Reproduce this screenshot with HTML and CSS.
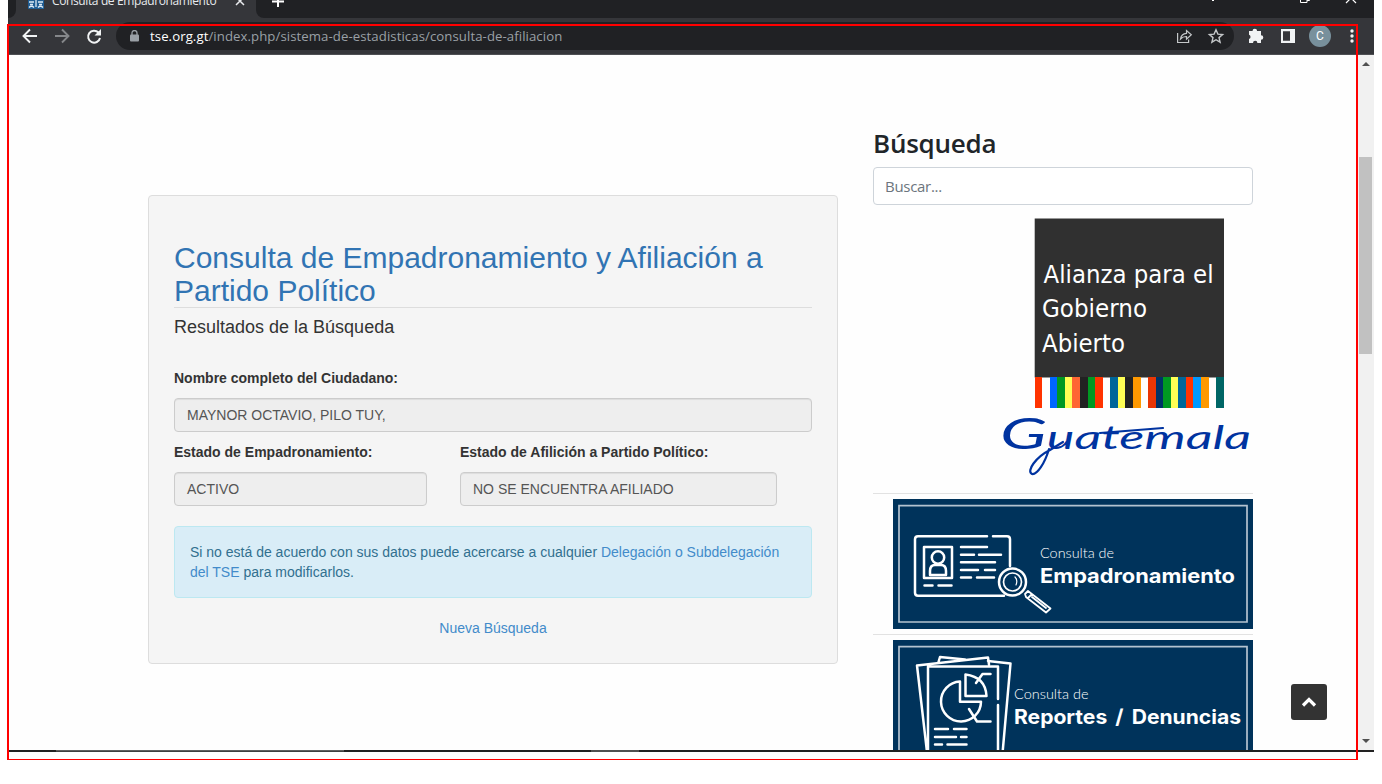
FILE: index.html
```html
<!DOCTYPE html>
<html lang="es">
<head>
<meta charset="utf-8">
<title>Consulta de Empadronamiento</title>
<link rel="stylesheet" href="styles.css">
</head>
<body>
<div class="browser">
  <div class="tabs">
    <div class="tab-prev"></div>
    <div class="tab">
      <svg class="favicon" width="16" height="10" viewBox="0 0 16 10"><path fill="#1f5d93" d="M0 0h16v9H0z"/><path d="M1 2h5M10 2h5M2 4.500h3M11 4.500h3M1 7.500c2-2 4-1 5 0M10 7.500c2-2 4-1 5 0M8 0v7" stroke="#dceaf5" stroke-width="1.300" fill="none"/></svg>
      <span class="tab-title">Consulta de Empadronamiento</span>
      <svg class="tab-close" width="10" height="10" viewBox="0 0 10 10"><path d="M1 -3l8 8M9 -3l-8 8" stroke="#e8eaed" stroke-width="1.500"/></svg>
    </div>
    <div class="strip">
      <svg width="1118" height="18" viewBox="256 0 1118 18"><path d="M272 1.500h12M278 -5v12" stroke="#fff" stroke-width="2"/><path d="M1212 0h2v1h-2z" fill="#fff"/><path d="M1300.500 -3v5.500h6.500v-5.500M1307 .5h2.500v-3" stroke="#fff" fill="none"/><path d="M1346 3l10-10M1356 3l-10-10" stroke="#fff" stroke-width="1.200"/></svg>
    </div>
  </div>
  <div class="toolbar">
    <svg class="nav-icons" width="100" height="36" viewBox="8 18 100 36" fill="none" stroke-width="1.900">
      <path d="M37 36H24M30 29.500L23.500 36l6.500 6.500" stroke="#f1f3f4"/>
      <path d="M55 36h13M62 29.500l6.500 6.500-6.500 6.500" stroke="#85878a"/>
      <path d="M98.500 32.500A6 6 0 1 0 100 38" stroke="#f1f3f4" stroke-width="2"/><path d="M101 29v6.500h-6.500z" fill="#f1f3f4"/>
    </svg>
    <div class="address">
      <svg width="9" height="12" viewBox="0 0 9 12"><path d="M2 5V3a2.500 2.500 0 0 1 5 0v2" stroke="#9aa0a6" stroke-width="1.300" fill="none"/><rect y="4.500" width="9" height="7" rx="1" fill="#9aa0a6"/></svg>
      <span class="url"><b>tse.org.gt</b>/index.php/sistema-de-estadisticas/consulta-de-afiliacion</span>
      <svg class="addr-icons" width="50" height="20" viewBox="1175 26 50 20" fill="none" stroke="#c4c7c9" stroke-width="1.200"><path d="M1177.600 33v9.500h11v-3"/><path d="M1180.500 39c.5-3.500 2.500-5.500 6-5.700v-2.800l4.800 4.300-4.800 4.300v-2.600c-2.600-.1-4.300.7-6 2.500z"/><path d="M1216 29.800l1.900 4.300 4.700.4-3.600 3.100 1.100 4.600-4.100-2.500-4.100 2.500 1.100-4.600-3.600-3.100 4.700-.4z" stroke-width="1.400"/></svg>
    </div>
    <svg class="ext-icons" width="60" height="24" viewBox="1242 24 60 24"><path fill="#f1f3f4" d="M1249 31h3.500a2.300 2.300 0 0 1 4.600 0h3.900v4.200a2.300 2.300 0 0 1 0 4.600v3.200h-3.600a2.200 2.200 0 0 0-4.400 0h-4v-4a2.200 2.200 0 0 0 0-4.200z"/><path d="M1281 29h14v14h-14zM1283 31.200v9.600h7v-9.600z" fill="#f1f3f4" fill-rule="evenodd"/></svg>
    <span class="avatar">C</span>
    <svg class="dots" width="6" height="16" viewBox="0 0 6 16" fill="#f1f3f4"><circle cx="3" cy="3" r="1.700"/><circle cx="3" cy="8" r="1.700"/><circle cx="3" cy="13" r="1.700"/></svg>
  </div>
  <div class="viewport">
    <main class="main">
      <section class="card">
        <h1>Consulta de Empadronamiento y Afiliación a Partido Político</h1>
        <h2>Resultados de la Búsqueda</h2>
        <div class="label">Nombre completo del Ciudadano:</div>
        <div class="field">MAYNOR OCTAVIO, PILO TUY,</div>
        <div class="row">
          <div class="col-a"><div class="label">Estado de Empadronamiento:</div><div class="field">ACTIVO</div></div>
          <div class="col-b"><div class="label">Estado de Afilición a Partido Político:</div><div class="field">NO SE ENCUENTRA AFILIADO</div></div>
        </div>
        <div class="alert">Si no está de acuerdo con sus datos puede acercarse a cualquier <a>Delegación o Subdelegación del TSE</a> para modificarlos.</div>
        <a class="again">Nueva Búsqueda</a>
      </section>
      <aside class="sidebar">
        <h3>Búsqueda</h3>
        <div class="search">Buscar...</div>
        <svg class="alliance" width="260" height="270" viewBox="995 216 260 270">
          <path fill="#303030" d="M1034.700 218.500h189.300v159h-189.300z"/>
          <g fill="#fff" font-family="'DejaVu Sans', sans-serif" font-size="25">
            <text x="1043.500" y="283" textLength="170" lengthAdjust="spacingAndGlyphs">Alianza para el</text>
            <text x="1042" y="316.500" textLength="105" lengthAdjust="spacingAndGlyphs">Gobierno</text>
            <text x="1042" y="351.500" textLength="83" lengthAdjust="spacingAndGlyphs">Abierto</text>
          </g>
          <g transform="translate(1034.700 377) scale(7.560 31)" shape-rendering="crispEdges">
            <path fill="#ff3300" d="M0 0h1v1H0zM8 0h1v1H8zM20 0h1v1h-1z"/><path fill="#e93605" d="M15 0h1v1h-1z"/><path fill="#0066ff" d="M2 0h1v1H2z"/><path fill="#009922" d="M3 0h1v1H3zM7 0h1v1H7zM17 0h1v1h-1z"/><path fill="#ffff55" d="M4 0h1v1H4zM11 0h1v1h-1zM18 0h1v1h-1z"/><path fill="#ff6633" d="M5 0h1v1H5z"/><path fill="#222" d="M6 0h1v1H6zM12 0h1v1h-1z"/><path fill="#006699" d="M10 0h1v1h-1zM19 0h1v1h-1z"/><path fill="#ff9900" d="M13 0h1v1h-1zM22 0h1v1h-1z"/><path fill="#003366" d="M16 0h1v1h-1z"/><path fill="#0099ff" d="M21 0h1v1h-1z"/><path fill="#006666" d="M24 0h1v1h-1z"/>
          </g>
          <g fill="#0033a0" font-family="Lato, sans-serif" font-style="italic" font-weight="400">
            <text x="1000" y="449" font-size="32" textLength="251" lengthAdjust="spacingAndGlyphs"><tspan font-size="42">G</tspan>uatemala</text>
          </g>
          <path d="M1049 449c-4 14-12 26-17 25-6-3 4-17 18-24l13-8M1100 433l63-5" fill="none" stroke="#0033a0" stroke-width="2.200" stroke-linecap="round"/>
        </svg>
        <div class="banner-row">
          <svg class="banner" width="360" height="130" viewBox="893 499 360 130">
            <path fill="#00335b" d="M893 499h360v130H893z"/><path d="M899 505.700h348v116.300H899z" fill="none" stroke="#b4c3d0" stroke-width="1.700"/>
            <g fill="none" stroke="#fff" stroke-width="2.500" stroke-linecap="round" stroke-linejoin="round">
              <path d="M987 536.300h-69q-3 0-3 3v53.500q0 3 3 3h86M993 536.300h14q3 0 3 3V566"/>
              <path d="M924 547h28v31h-28zM930 575v-4q0-6 5-6h6q5 0 5 6v4z"/><circle cx="938" cy="557.500" r="6.200"/>
              <path d="M924.500 585.400h8M938.500 585.400h13M961 547h26M961 554.700h13M979 554.700h22M961 562.200h34M961 570h17M985 570h10M961 577.600h10M977 577.600h17"/>
              <circle cx="1012.500" cy="582" r="13.500" fill="#00335b"/><circle cx="1012.500" cy="582" r="9" stroke-width="1.700"/><path d="M1015 577q3 3 1 8" stroke-width="1.200"/>
              <path d="M1025 594l3-3 22.500 17.500-4.500 4-20-15.500zM1028 598l4-4M1032 597l14 11" stroke-width="1.800"/>
            </g>
            <g fill="#fff"><text x="1040" y="557.700" font-family="Lato, sans-serif" font-weight="300" font-size="13" textLength="74" lengthAdjust="spacingAndGlyphs">Consulta de</text><text x="1040" y="583" font-family="Inter, sans-serif" font-weight="700" font-size="20" textLength="195" lengthAdjust="spacingAndGlyphs">Empadronamiento</text></g>
          </svg>
        </div>
        <div class="banner-row">
          <svg class="banner" width="360" height="130" viewBox="893 640 360 130">
            <path fill="#00335b" d="M893 640h360v130H893z"/><path d="M899 646.700h348v116.300H899z" fill="none" stroke="#b4c3d0" stroke-width="1.700"/>
            <g fill="none" stroke="#fff" stroke-width="2.500" stroke-linecap="round" stroke-linejoin="round">
              <path d="M928 760v-93.500h70V699M998 705v55M927 752l-10-86.500 71-8 1 7M938.500 662l1.500-5 25 2.500M988 661l22.500 2.500-8 90"/>
              <path d="M960 681.500a20 20 0 1 0 21 20.200h-21zM965.500 674.500v21.500h21q-1-19-21-21.500z"/>
              <path d="M976 683l6.500-9h8M969 709l8 12.500h13.500M935 729h13M962 729h4.500M935 737h21M961 737h5.500M935 744.600h7M947.500 744.600h19M962 729h-8"/>
            </g>
            <g fill="#fff"><text x="1014" y="699" font-family="Lato, sans-serif" font-weight="300" font-size="13" textLength="74.500" lengthAdjust="spacingAndGlyphs">Consulta de</text><text x="1014" y="724" font-family="Inter, sans-serif" font-weight="700" font-size="20" word-spacing="3" textLength="227" lengthAdjust="spacingAndGlyphs">Reportes / Denuncias</text></g>
          </svg>
        </div>
      </aside>
      <div class="to-top"><svg width="16" height="10" viewBox="0 0 16 10"><path d="M2 8.500l6-6 6 6" stroke="#fff" stroke-width="3.200" fill="none"/></svg></div>
    </main>
    <div class="scrollbar"><span class="arrow up"></span><div class="thumb"></div><span class="arrow down"></span></div>
  </div>
  <div class="taskbar"><span class="task-search"></span><span class="task-active"></span></div>
</div>
<div class="frame"></div>
</body>
</html>
```
FILE: styles.css
```css
* { box-sizing: border-box; }
body { margin: 0; width: 1382px; height: 784px; overflow: hidden; background: #fff; position: relative; }
h1, h2, h3 { margin: 0; font-weight: 400; }
svg { display: block; flex: none; }
.browser { width: 1366px; height: 752px; margin-left: 8px; display: flex; flex-direction: column; overflow: hidden; }
.tabs { height: 18px; display: flex; background: #35363a; flex: none; }
.tab-prev { width: 8px; background: #202124; border-bottom-right-radius: 8px; }
.tab { width: 240px; display: flex; padding-left: 12px; background: #35363a; }
.tab-title { width: 174px; margin: -8px 0 0 8px; color: #e8eaed; font: 12px/17px "Open Sans", sans-serif; white-space: nowrap; letter-spacing: -.38px; }
.tab-close { margin-left: 9px; overflow: hidden; }
.strip { flex: 1; background: #202124; border-bottom-left-radius: 8px; overflow: hidden; }
.toolbar { height: 37px; flex: none; display: flex; align-items: center; background: #35363a; border-bottom: 1px solid #4e4f53; }
.nav-icons { margin-right: 8px; }
.address { width: 1118px; height: 28px; border-radius: 14px; background: #202124; display: flex; align-items: center; padding: 0 9px 0 14px; }
.url { flex: 1; margin-left: 11px; color: #9aa0a6; font: 13.2px/20px "Open Sans", sans-serif; letter-spacing: .075px; white-space: nowrap; }
.url b { color: #fff; font-weight: 400; }
.ext-icons { margin-left: 8px; }
.avatar { margin-left: 7px; width: 22px; height: 22px; border-radius: 50%; background: #78909c; color: #fff; font: 12px/22px Roboto, sans-serif; text-align: center; }
.dots { margin-left: 18px; }
.viewport { flex: 1; min-height: 0; display: flex; }
.main { width: 1350px; display: flex; align-items: flex-start; overflow: hidden; background: #fefefe; padding-left: 140px; position: relative; font: 14px/20px "Liberation Sans", Arial, sans-serif; color: #333; }
.card { width: 690px; height: 469px; flex: none; margin-top: 140px; background: #f5f5f5; border: 1px solid #ddd; border-radius: 4px; padding: 45px 25px 0; }
.card h1 { font-size: 30px; line-height: 33px; color: #3174b3; border-bottom: 1px solid #ddd; height: 67px; }
.card h2 { font-size: 18px; line-height: 20px; margin: 9px 0 31px; }
.label { font-weight: 700; line-height: 20px; margin-bottom: 10px; }
.field { height: 34px; border: 1px solid #ccc; border-radius: 4px; background: #eee; color: #555; padding: 6px 12px; box-shadow: inset 0 1px 1px rgba(0,0,0,.075); white-space: nowrap; }
.row { display: flex; gap: 33px; margin-top: 10px; }
.col-a { width: 253px; }
.col-b { width: 317px; }
.alert { margin-top: 20px; height: 72px; padding: 15px; border: 1px solid #bce8f1; border-radius: 4px; background: #d9edf7; color: #31708f; }
.card a { color: #428bca; }
.again { display: block; margin-top: 20px; text-align: center; }
.sidebar { width: 380px; margin-left: 35px; padding-top: 71px; flex: none; }
.sidebar h3 { color: #212529; font: 600 26px/34px "Open Sans", sans-serif; letter-spacing: -.25px; margin-bottom: 7px; }
.search { height: 38px; border: 1px solid #ced4da; border-radius: 4px; background: #fff; color: #6c757d; padding: 6px 11px; font: 15px/24px "Open Sans", sans-serif; letter-spacing: -.3px; }
.alliance { margin: 11px 0 7px 122px; }
.banner-row { height: 141px; border-top: 1px solid #e2e2e2; padding: 5px 0 0 20px; }
.to-top { position: absolute; left: 1283px; top: 629px; width: 36px; height: 36px; border-radius: 3px; background: #333; display: flex; align-items: center; justify-content: center; }
.scrollbar { width: 16px; background: #f1f1f1; display: flex; flex-direction: column; align-items: center; padding: 7px 1px 7px 0; }
.thumb { width: 13px; height: 197px; margin: 91px 0 auto; background: #c1c1c1; }
.arrow { border: 4px solid transparent; border-top: 0; border-bottom: 4px solid #505050; }
.arrow.down { border-top: 4px solid #505050; border-bottom: 0; }
.taskbar { height: 2px; flex: none; background: #222; display: flex; padding-left: 48px; }
.task-search { width: 288px; background: #404040; border-top: 1px solid #606060; }
.task-active { width: 48px; margin-left: 247px; background: #505050; }
.frame { position: absolute; left: 7px; top: 24px; width: 1351px; height: 736px; border: 2px solid #f00; border-bottom-width: 1px; }
```
